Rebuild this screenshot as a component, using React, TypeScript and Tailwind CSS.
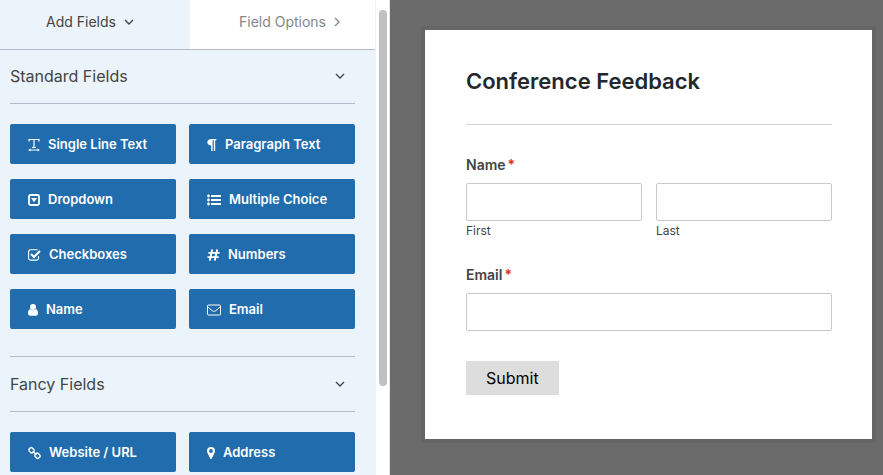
import React, { useState } from "react";
import clsx from "clsx";

type IconName =
  | "text"
  | "paragraph"
  | "dropdown"
  | "list"
  | "check"
  | "hash"
  | "user"
  | "envelope"
  | "link"
  | "marker";

interface Field {
  label: string;
  icon: IconName;
}

interface FieldGroup {
  title: string;
  fields: Field[];
}

const groups: FieldGroup[] = [
  {
    title: "Standard Fields",
    fields: [
      { label: "Single Line Text", icon: "text" },
      { label: "Paragraph Text", icon: "paragraph" },
      { label: "Dropdown", icon: "dropdown" },
      { label: "Multiple Choice", icon: "list" },
      { label: "Checkboxes", icon: "check" },
      { label: "Numbers", icon: "hash" },
      { label: "Name", icon: "user" },
      { label: "Email", icon: "envelope" },
    ],
  },
  {
    title: "Fancy Fields",
    fields: [
      { label: "Website / URL", icon: "link" },
      { label: "Address", icon: "marker" },
    ],
  },
];

// every icon is 14 units high, the width varies per glyph
const icons: Record<IconName, { width: number; body: React.ReactNode }> = {
  text: {
    width: 12,
    body: (
      <>
        <path d="M1 3.6V1.5h10v2.1M6 1.5v8M4 9.5h4" fill="none" stroke="currentColor" strokeWidth="1.2" />
        <path d="M1.5 12h9" stroke="currentColor" />
        <path d="M2.4 10.5v3L.2 12zM9.6 10.5v3l2.200-1.500z" />
      </>
    ),
  },
  paragraph: {
    width: 10,
    body: <path d="M9.4 1v1.3H8.2V13H6.8V2.3H5.6V13H4.2V7.6C2 7.6.3 6.2.3 4.3S2 1 4.4 1z" />,
  },
  dropdown: {
    width: 12,
    body: (
      <>
        <rect x="1" y="2" width="10" height="10" rx="1.4" fill="none" stroke="currentColor" strokeWidth="1.8" />
        <path d="M3 5h6L6 9.2z" />
      </>
    ),
  },
  list: {
    width: 14,
    body: (
      <>
        <circle cx="1.5" cy="3" r="1.4" />
        <circle cx="1.5" cy="7" r="1.4" />
        <circle cx="1.5" cy="11" r="1.4" />
        <path d="M4 2h10v2H4zM4 6h10v2H4zM4 10h10v2H4z" />
      </>
    ),
  },
  check: {
    width: 13,
    body: (
      <>
        <path d="M10.500 8v2.300a1.800 1.800 0 0 1-1.800 1.800H2.400A1.800 1.800 0 0 1 .6 10.300V3.600a1.800 1.800 0 0 1 1.800-1.800h6.300c.4 0 .7.100 1 .3" fill="none" stroke="currentColor" strokeWidth="1.1" />
        <path d="M3 6l3 3 6-6" fill="none" stroke="currentColor" strokeWidth="2.1" />
      </>
    ),
  },
  hash: {
    width: 13,
    body: <path d="M5.2 1.4L2.8 12.6M10.2 1.4L7.8 12.6M1.4 4.9h11.2M.5 9.1h11.2" fill="none" stroke="currentColor" strokeWidth="1.9" />,
  },
  user: {
    width: 10,
    body: (
      <>
        <circle cx="5" cy="4" r="3" />
        <path d="M2.2 6C.8 6.400 0 8.200 0 10.200 0 11.800.9 12.700 2.200 12.700h5.600c1.300 0 2.200-.9 2.200-2.500 0-2-.8-3.800-2.200-4.200A3.900 3.900 0 0 1 5 7.200 3.900 3.900 0 0 1 2.200 6z" />
      </>
    ),
  },
  envelope: {
    width: 14,
    body: (
      <g fill="none" stroke="currentColor">
        <rect x=".5" y="2" width="13" height="10" rx="1" />
        <path d="M.7 3.700C2 5.300 4 6.600 5.600 7.900c.9.700 1.900.700 2.800 0C10 6.600 12 5.300 13.300 3.700" />
      </g>
    ),
  },
  link: {
    width: 13,
    body: (
      <g fill="none" stroke="currentColor" strokeWidth="1.400">
        <rect x="1" y="2" width="5" height="4.400" rx="1.800" transform="rotate(45 3.500 4.200)" />
        <rect x="7" y="7.600" width="5" height="4.400" rx="1.800" transform="rotate(45 9.500 9.800)" />
        <path d="M4.800 5.300l3.600 3.500" />
      </g>
    ),
  },
  marker: {
    width: 8,
    body: <path fillRule="evenodd" d="M4 1a4 4 0 0 0-4 4c0 .6.100 1.100.3 1.600l2.900 5.900c.3.700 1.300.7 1.600 0l2.900-5.900C7.900 6.100 8 5.600 8 5a4 4 0 0 0-4-4zm0 2.100a1.900 1.900 0 1 1 0 3.800 1.900 1.900 0 0 1 0-3.800z" />,
  },
};

function FieldIcon({ name }: { name: IconName }) {
  const { width, body } = icons[name];
  return (
    <svg width={width} height={14} viewBox={`0 0 ${width} 14`} fill="currentColor" className="shrink-0" aria-hidden="true">
      {body}
    </svg>
  );
}

function Chevron({ right = false }: { right?: boolean }) {
  return (
    <svg width={10} height={10} viewBox="0 0 10 10" fill="none" stroke="currentColor" strokeWidth="1.3" aria-hidden="true">
      <path d={right ? "M3 1l4 4-4 4" : "M1 3l4 4 4-4"} />
    </svg>
  );
}

function FieldSection({ group }: { group: FieldGroup }) {
  const [open, setOpen] = useState(true);

  return (
    <section className="group border-t border-[#b0bac8] pb-[27px] first:border-t-0">
      <button
        type="button"
        onClick={() => setOpen(o => !o)}
        aria-expanded={open}
        className="flex h-[55px] w-full items-center justify-between border-b border-[#b0bac8] pr-[10px] text-left text-base text-[#444444] group-first:h-[54px] group-first:pb-0.5"
      >
        {group.title}
        <Chevron right={!open} />
      </button>
      {open && (
        <div className="grid grid-cols-2 gap-x-[13px] gap-y-[15px] pt-5">
          {group.fields.map(f => (
            <button
              key={f.label}
              type="button"
              className="flex h-10 items-center gap-2 rounded-xs bg-[#216cad] pt-0.5 pl-[18px] text-[13px] font-semibold text-white"
            >
              <FieldIcon name={f.icon} />
              {f.label}
            </button>
          ))}
        </div>
      )}
    </section>
  );
}

function FieldLabel({ htmlFor, children }: { htmlFor: string; children: React.ReactNode }) {
  return (
    <label htmlFor={htmlFor} className="mb-2 flex gap-0.5 text-sm leading-5 font-semibold text-[#444444]">
      {children}
      <span className="text-[#e8281c]">*</span>
    </label>
  );
}

const inputClass = "block h-[38px] w-full rounded-xs border border-[#c8c8c8] bg-white px-2 text-sm outline-none";

function FormPreview() {
  return (
    <form
      onSubmit={e => e.preventDefault()}
      className="bg-white px-10 pt-[35px] pb-11 pl-[41px] shadow-[0_0_0_4px_#656565]"
    >
      <h1 className="border-b border-[#d2d2d2] pb-[27px] text-[22px] leading-8 font-semibold text-[#23282d]">
        Conference Feedback
      </h1>
      <div className="pt-[30px]">
        <FieldLabel htmlFor="first-name">Name</FieldLabel>
        <div className="grid grid-cols-2 gap-[14px] text-xs leading-5 text-[#444444]">
          <div>
            <input id="first-name" type="text" className={inputClass} />
            <label htmlFor="first-name">First</label>
          </div>
          <div>
            <input id="last-name" type="text" className={inputClass} />
            <label htmlFor="last-name">Last</label>
          </div>
        </div>
      </div>
      <div className="pt-6">
        <FieldLabel htmlFor="email">Email</FieldLabel>
        <input id="email" type="email" className={inputClass} />
      </div>
      <button type="submit" className="mt-[30px] h-[34px] bg-[#dddddd] px-5 text-base text-black">
        Submit
      </button>
    </form>
  );
}

export default function App() {
  const [tab, setTab] = useState<"add" | "options">("add");

  return (
    <div className="flex h-screen overflow-hidden bg-[#6b6b6b] font-['Inter','Liberation_Sans',sans-serif]">
      <aside className="flex w-[390px] shrink-0 bg-white">
        <div className="flex-1 bg-[#ebf3fb]">
          <nav className="mr-px grid h-[50px] grid-cols-[190px_1fr] border-b border-[#b0bac8] bg-white text-sm">
            <button
              type="button"
              onClick={() => setTab("add")}
              className={clsx("flex items-center justify-center gap-2 pr-[10px] pb-[5px]", tab === "add" ? "bg-[#ebf3fb] text-[#444444]" : "text-[#868686]")}
            >
              Add Fields
              <Chevron right={tab !== "add"} />
            </button>
            <button
              type="button"
              onClick={() => setTab("options")}
              className={clsx("flex items-center justify-center gap-[6px] pb-[5px] pl-4", tab === "options" ? "bg-[#ebf3fb] text-[#444444]" : "text-[#868686]")}
            >
              Field Options
              <Chevron right={tab !== "options"} />
            </button>
          </nav>
          <div className="pr-[21px] pl-[10px]">
            {groups.map(g => (
              <FieldSection key={g.title} group={g} />
            ))}
          </div>
        </div>
        {/* scroll track */}
        <div className="flex w-[14px] justify-center border-r border-[#e4e9ef] pt-[10px]">
          <div className="h-[376px] w-2 rounded-full bg-[#c1c1c1]" />
        </div>
      </aside>
      <main className="min-w-0 flex-1 pt-[30px] pr-[11px] pl-[35px]">
        <FormPreview />
      </main>
    </div>
  );
}
